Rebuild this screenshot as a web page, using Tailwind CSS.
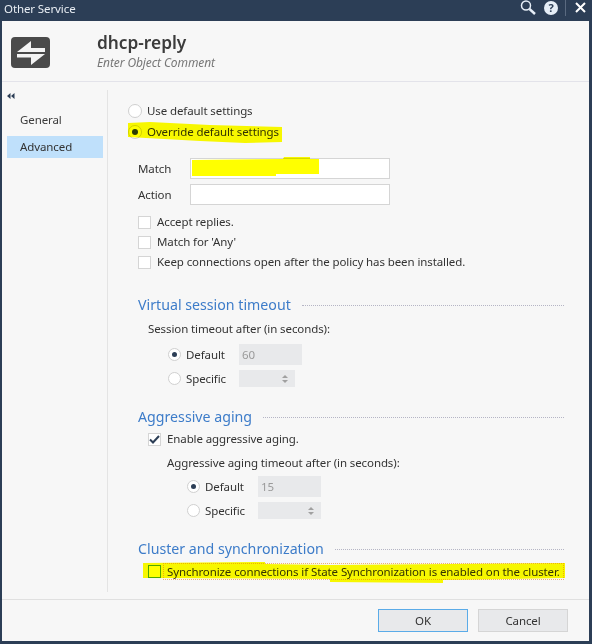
<!DOCTYPE html>
<html lang="en">
  <head>
    <meta charset="UTF-8" />
    <title>Other Service</title>
    <script src="https://cdn.jsdelivr.net/npm/@tailwindcss/browser@4"></script>
  </head>
  <body class="bg-[#2c3e56] font-['Noto_Sans',sans-serif] text-[11.5px] tracking-[-0.1px] text-[#333] overflow-hidden">
    <div class="relative w-[592px] h-[644px] flex flex-col">
      <!-- Title bar -->
      <div class="h-[21px] flex items-start justify-between text-[#e8edf3]">
        <span class="pl-[4px]">Other Service</span>
        <div class="flex items-start">
          <svg width="16" height="15" viewBox="0 0 16 15" class="mr-[8px]" fill="none" stroke="#e6eef7">
            <circle cx="6" cy="5.5" r="4.5" stroke-width="1.5" />
            <path d="M9.5 9l5.5 5" stroke-width="2.4" />
          </svg>
          <div class="w-[14px] h-[14px] mt-[1px] rounded-full bg-[#e6eef7] text-[#2c3e56] text-[11px] font-bold flex items-center justify-center mr-[7px]">?</div>
          <div class="w-px h-[16px] bg-[#5a6a80] mr-[9px]"></div>
          <svg width="11" height="11" viewBox="0 0 11 11" class="mt-[2px] mr-[6px]" stroke="#fff" stroke-width="2">
            <path d="M1 1l9 9M10 1l-9 9" />
          </svg>
        </div>
      </div>

      <!-- Dialog -->
      <div class="ml-[2px] mr-[3px] h-[620px] bg-[#f7f7f7] flex flex-col">
        <div class="h-[61px] shrink-0 flex border-b border-[#e3e3ea]">
          <div class="w-[39px] h-[31px] ml-[9px] mt-[16px] rounded-[4px] bg-[#4a4a4a]">
            <svg width="39" height="31" viewBox="0 0 39 31" fill="#f4f4f4">
              <path d="M6 15L20 4V11H34V15ZM6 17H34L20 28V20.5H6Z" />
            </svg>
          </div>
          <div class="ml-[47px] mt-[11px]">
            <div class="text-[17.3px] leading-[22px] tracking-normal font-semibold text-[#3c3c3c]">dhcp-reply</div>
            <div class="italic text-[12px] text-[#777] leading-[18px]">Enter Object Comment</div>
          </div>
        </div>

        <div class="flex h-[517px] shrink-0">
          <!-- Side nav -->
          <div class="w-[105px] shrink-0 pl-[5px] pt-[11px]">
            <svg width="8" height="6" viewBox="0 0 8 6" fill="#2c3e56" class="block"><path d="M0 3l3.5-3v6zM4 3l3.5-3v6z" /></svg>
            <div class="h-[24px] pl-[13px] mt-[9px] flex items-center text-[#3c3c3c]">General</div>
            <div class="w-[96px] h-[22px] pl-[13px] mt-[4px] flex items-center bg-[#bfe0fb]">Advanced</div>
          </div>

          <!-- Content -->
          <div class="w-[481px] mt-[8px] h-[502px] border-l border-[#e4e4e4] pl-[20px]">
            <div class="h-[21px] mt-[10px] flex items-center gap-[5px]">
              <span class="w-[14px] h-[14px] rounded-full border border-[#d0d0d0] bg-white"></span>
              <span>Use default settings</span>
            </div>
            <div class="h-[21px] flex items-center gap-[5px]">
              <span class="w-[14px] h-[14px] rounded-full border border-[#d0d0d0] bg-white flex items-center justify-center">
                <span class="w-[6px] h-[6px] rounded-full bg-[#2c3e56]"></span>
              </span>
              <span>Override default settings</span>
            </div>

            <div class="ml-[10px] mt-[16px] flex items-center h-[21px]">
              <span class="w-[52px]">Match</span>
              <div class="w-[200px] h-[21px] bg-white border border-[#d5d5d5]"></div>
            </div>
            <div class="ml-[10px] mt-[5px] flex items-center h-[21px]">
              <span class="w-[52px]">Action</span>
              <div class="w-[200px] h-[21px] bg-white border border-[#d5d5d5]"></div>
            </div>

            <div class="ml-[10px] mt-[7px] h-[20px] flex items-center gap-[6px]">
              <span class="w-[13px] h-[13px] border border-[#d5d5d5] bg-white"></span>
              <span>Accept replies.</span>
            </div>
            <div class="ml-[10px] h-[20px] flex items-center gap-[6px]">
              <span class="w-[13px] h-[13px] border border-[#d5d5d5] bg-white"></span>
              <span>Match for 'Any'</span>
            </div>
            <div class="ml-[10px] h-[20px] flex items-center gap-[6px]">
              <span class="w-[13px] h-[13px] border border-[#d5d5d5] bg-white"></span>
              <span>Keep connections open after the policy has been installed.</span>
            </div>

            <!-- Virtual session timeout -->
            <div class="ml-[10px] mt-[23px] h-[20px] flex items-center">
              <span class="text-[14.2px] tracking-normal text-[#3d7cc9]">Virtual session timeout</span>
              <span class="flex-1 ml-[11px] mr-[24px] border-t border-dotted border-[#b5b5c5]"></span>
            </div>
            <div class="ml-[20px] mt-[5px] h-[18px] flex items-center">Session timeout after (in seconds):</div>
            <div class="ml-[40px] mt-[6px] h-[21px] flex items-center">
              <span class="w-[13px] h-[13px] rounded-full border border-[#d0d0d0] bg-white flex items-center justify-center">
                <span class="w-[5px] h-[5px] rounded-full bg-[#2c3e56]"></span>
              </span>
              <span class="w-[53px] ml-[5px]">Default</span>
              <div class="w-[63px] h-[21px] bg-[#e8e9eb] pl-[3px] text-[#9a9a9a] flex items-center">60</div>
            </div>
            <div class="ml-[40px] mt-[5px] h-[17px] flex items-center">
              <span class="w-[13px] h-[13px] rounded-full border border-[#d0d0d0] bg-white"></span>
              <span class="w-[53px] ml-[5px]">Specific</span>
              <div class="w-[56px] h-[17px] bg-[#e8e9eb] flex flex-col items-end justify-center gap-[2px] pr-[7px]">
                <span class="w-0 h-0 border-x-[3px] border-x-transparent border-b-[3px] border-b-[#a0a0a0]"></span>
                <span class="w-0 h-0 border-x-[3px] border-x-transparent border-t-[3px] border-t-[#a0a0a0]"></span>
              </div>
            </div>

            <!-- Aggressive aging -->
            <div class="ml-[10px] mt-[20px] h-[20px] flex items-center">
              <span class="text-[14.2px] tracking-normal text-[#3d7cc9]">Aggressive aging</span>
              <span class="flex-1 ml-[11px] mr-[24px] border-t border-dotted border-[#b5b5c5]"></span>
            </div>
            <div class="ml-[20px] mt-[3px] h-[18px] flex items-center gap-[6px]">
              <span class="w-[13px] h-[13px] border border-[#d5d5d5] bg-white flex items-center justify-center">
                <svg width="11" height="9" viewBox="0 0 11 9" fill="none" stroke="#2c3e56" stroke-width="2"><path d="M1 4.5l3 3 6-6.5" /></svg>
              </span>
              <span>Enable aggressive aging.</span>
            </div>
            <div class="ml-[39px] mt-[6px] h-[18px] flex items-center">Aggressive aging timeout after (in seconds):</div>
            <div class="ml-[59px] mt-[4px] h-[21px] flex items-center">
              <span class="w-[13px] h-[13px] rounded-full border border-[#d0d0d0] bg-white flex items-center justify-center">
                <span class="w-[5px] h-[5px] rounded-full bg-[#2c3e56]"></span>
              </span>
              <span class="w-[53px] ml-[5px]">Default</span>
              <div class="w-[63px] h-[21px] bg-[#e8e9eb] pl-[3px] text-[#9a9a9a] flex items-center">15</div>
            </div>
            <div class="ml-[59px] mt-[5px] h-[17px] flex items-center">
              <span class="w-[13px] h-[13px] rounded-full border border-[#d0d0d0] bg-white"></span>
              <span class="w-[53px] ml-[5px]">Specific</span>
              <div class="w-[63px] h-[17px] bg-[#e8e9eb] flex flex-col items-end justify-center gap-[2px] pr-[7px]">
                <span class="w-0 h-0 border-x-[3px] border-x-transparent border-b-[3px] border-b-[#a0a0a0]"></span>
                <span class="w-0 h-0 border-x-[3px] border-x-transparent border-t-[3px] border-t-[#a0a0a0]"></span>
              </div>
            </div>

            <!-- Cluster -->
            <div class="ml-[10px] mt-[20px] h-[20px] flex items-center">
              <span class="text-[14.2px] tracking-normal text-[#3d7cc9]">Cluster and synchronization</span>
              <span class="flex-1 ml-[11px] mr-[24px] border-t border-dotted border-[#b5b5c5]"></span>
            </div>
            <div class="ml-[20px] mt-[3px] h-[18px] flex items-center gap-[2px]">
              <span class="w-[13px] h-[13px] border border-[#4fa84f] bg-white"></span>
              <span class="px-[3px] leading-[15px] border border-dotted border-[#f0b070]">Synchronize connections if State Synchronization is enabled on the cluster.</span>
            </div>
          </div>
        </div>

        <!-- Footer -->
        <div class="h-[42px] border-t border-[#e0e0e0] flex justify-end items-start gap-[10px] pt-[9px] pr-[21px]">
          <button class="w-[90px] h-[23px] bg-[#e8e9eb] border border-[#5aabe8] text-center">OK</button>
          <button class="w-[90px] h-[23px] bg-[#e8e9eb] border border-[#d5d5d5] text-center">Cancel</button>
        </div>
      </div>

      <!-- Yellow highlighter strokes drawn over the screenshot -->
      <svg class="absolute left-0 top-0 mix-blend-multiply pointer-events-none" width="592" height="644" fill="#ffff00">
        <path d="M128 123L150 122L210 125L282 127V142L245 143L200 141L128 137Z" />
        <path d="M192 160L283 159L284 157H310V159H319V174L276 174V176L192 176Z" />
        <path d="M143 563L265 562V564L330 565L565 563V578L443 580V583L330 582V579L143 578Z" />
      </svg>
    </div>
  </body>
</html>
